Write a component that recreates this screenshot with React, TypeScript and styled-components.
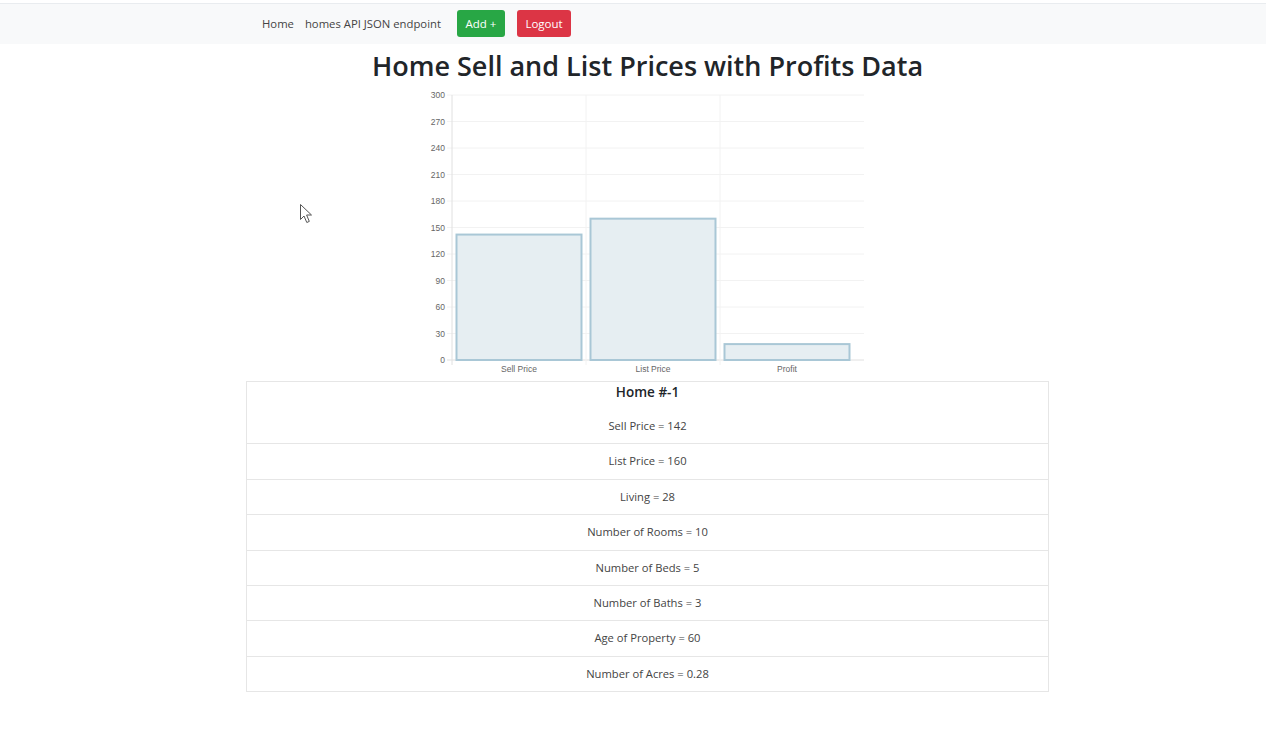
import React, { FC } from "react";
import styled, { createGlobalStyle } from "styled-components";

const FONT = `"Open Sans", "Noto Sans", "Liberation Sans", sans-serif`;

const GlobalStyle = createGlobalStyle`
  html, body {
    margin: 0;
    padding: 0;
    background: #ffffff;
  }
  body {
    font-family: ${FONT};
    color: #212529;
  }
`;

const Page = styled.div`
  position: relative;
  width: 1266px;
  min-height: 742px;
  padding-top: 3px;
  box-sizing: border-box;
`;

const NavBar = styled.nav`
  height: 40px;
  background: #f8f9fa;
  border-top: 1px solid #e9ecef;
`;

const Container = styled.div`
  width: 803px;
  margin-left: 246px;
  box-sizing: border-box;
`;

const NavInner = styled(Container)`
  height: 100%;
  display: flex;
  align-items: center;
  padding-left: 16px;
  padding-bottom: 2px;
  box-sizing: border-box;
`;

const NavLink = styled.a`
  font-size: 11.3px;
  color: #444;
  text-decoration: none;
  margin-right: 11px;
`;

const NavButton = styled.button<{ $variant: "success" | "danger" }>`
  height: 27px;
  padding: 0 8.5px;
  margin-left: 5px;
  margin-right: 7px;
  border: none;
  border-radius: 3px;
  font-family: ${FONT};
  font-size: 11.5px;
  color: #fff;
  background: ${(p) => (p.$variant === "success" ? "#28a745" : "#dc3545")};
`;

const Title = styled.h1`
  margin: 5px 0 0;
  text-align: center;
  font-size: 27px;
  font-weight: 600;
  line-height: 34px;
  color: #212529;
`;

const ChartWrap = styled.div`
  display: flex;
  justify-content: center;
  margin-top: 5px;
  margin-bottom: 3px;
`;

const Table = styled.div`
  border: 1px solid #e6e6e6;
`;

const Cell = styled.div`
  padding: 10px 0;
  text-align: center;
  font-size: 11.2px;
  line-height: 14.4px;
  color: #444;
  & + & {
    border-top: 1px solid #e6e6e6;
  }
`;

const FirstCell = styled(Cell)`
  padding-top: 0;
`;

const CellHeader = styled.div`
  font-size: 13.5px;
  font-weight: 600;
  line-height: 20px;
  color: #212529;
  margin-bottom: 17px;
`;

const Cursor = styled.svg`
  position: absolute;
  left: 299px;
  top: 203px;
`;

const data = [
  { label: "Sell Price", value: 142 },
  { label: "List Price", value: 160 },
  { label: "Profit", value: 18 },
];

const rows = [
  "List Price = 160",
  "Living = 28",
  "Number of Rooms = 10",
  "Number of Beds = 5",
  "Number of Baths = 3",
  "Age of Property = 60",
  "Number of Acres = 0.28",
];

const BarChart: FC = () => {
  const left = 34;
  const right = 446;
  const top = 7;
  const bottom = 272;
  const max = 300;
  const band = 134;
  const barWidth = 125;
  const ticks = [0, 30, 60, 90, 120, 150, 180, 210, 240, 270, 300];
  const y = (v: number) => bottom - ((bottom - top) * v) / max;
  return (
    <svg width={460} height={290} viewBox="0 0 460 290">
      {ticks.map((t) => (
        <g key={t}>
          <line x1={left - 5} x2={right} y1={y(t)} y2={y(t)} stroke={t === 0 ? "#e0e0e0" : "#f2f2f2"} strokeWidth={1} />
          <text x={left - 7} y={y(t) + 3} textAnchor="end" fontSize={8.5} fill="#666" fontFamily="Liberation Sans, sans-serif">
            {t}
          </text>
        </g>
      ))}
      {[0, 1, 2].map((i) => (
        <line
          key={i}
          x1={left + band * i}
          x2={left + band * i}
          y1={top}
          y2={bottom + 5}
          stroke={i === 0 ? "#e0e0e0" : "#f2f2f2"}
          strokeWidth={1}
        />
      ))}
      {data.map((d, i) => {
        const x = left + band * i + (band - barWidth) / 2;
        return (
          <g key={d.label}>
            <rect
              x={x}
              y={y(d.value)}
              width={barWidth}
              height={bottom - y(d.value)}
              fill="#e6eef2"
              stroke="#a9c7d6"
              strokeWidth={2}
            />
            <text
              x={left + band * i + band / 2}
              y={bottom + 12}
              textAnchor="middle"
              fontSize={8.5}
              fill="#666"
              fontFamily="Liberation Sans, sans-serif"
            >
              {d.label}
            </text>
          </g>
        );
      })}
    </svg>
  );
};

const App: FC = () => {
  return (
    <Page>
      <GlobalStyle />
      <NavBar>
        <NavInner>
          <NavLink href="#">Home</NavLink>
          <NavLink href="#">homes API JSON endpoint</NavLink>
          <NavButton $variant="success">Add +</NavButton>
          <NavButton $variant="danger">Logout</NavButton>
        </NavInner>
      </NavBar>
      <Container>
        <Title>Home Sell and List Prices with Profits Data</Title>
        <ChartWrap>
          <BarChart />
        </ChartWrap>
        <Table>
          <FirstCell>
            <CellHeader>Home #-1</CellHeader>
            Sell Price = 142
          </FirstCell>
          {rows.map((r) => (
            <Cell key={r}>{r}</Cell>
          ))}
        </Table>
      </Container>
      <Cursor width="16" height="22" viewBox="0 0 16 22">
        <path d="M1.5 1.5 L1.5 16.5 L5 13 L7.8 19.5 L10.3 18.4 L7.6 12 L12.5 12 Z" fill="#fff" stroke="#555" strokeWidth="1" />
      </Cursor>
    </Page>
  );
};

export default App;
